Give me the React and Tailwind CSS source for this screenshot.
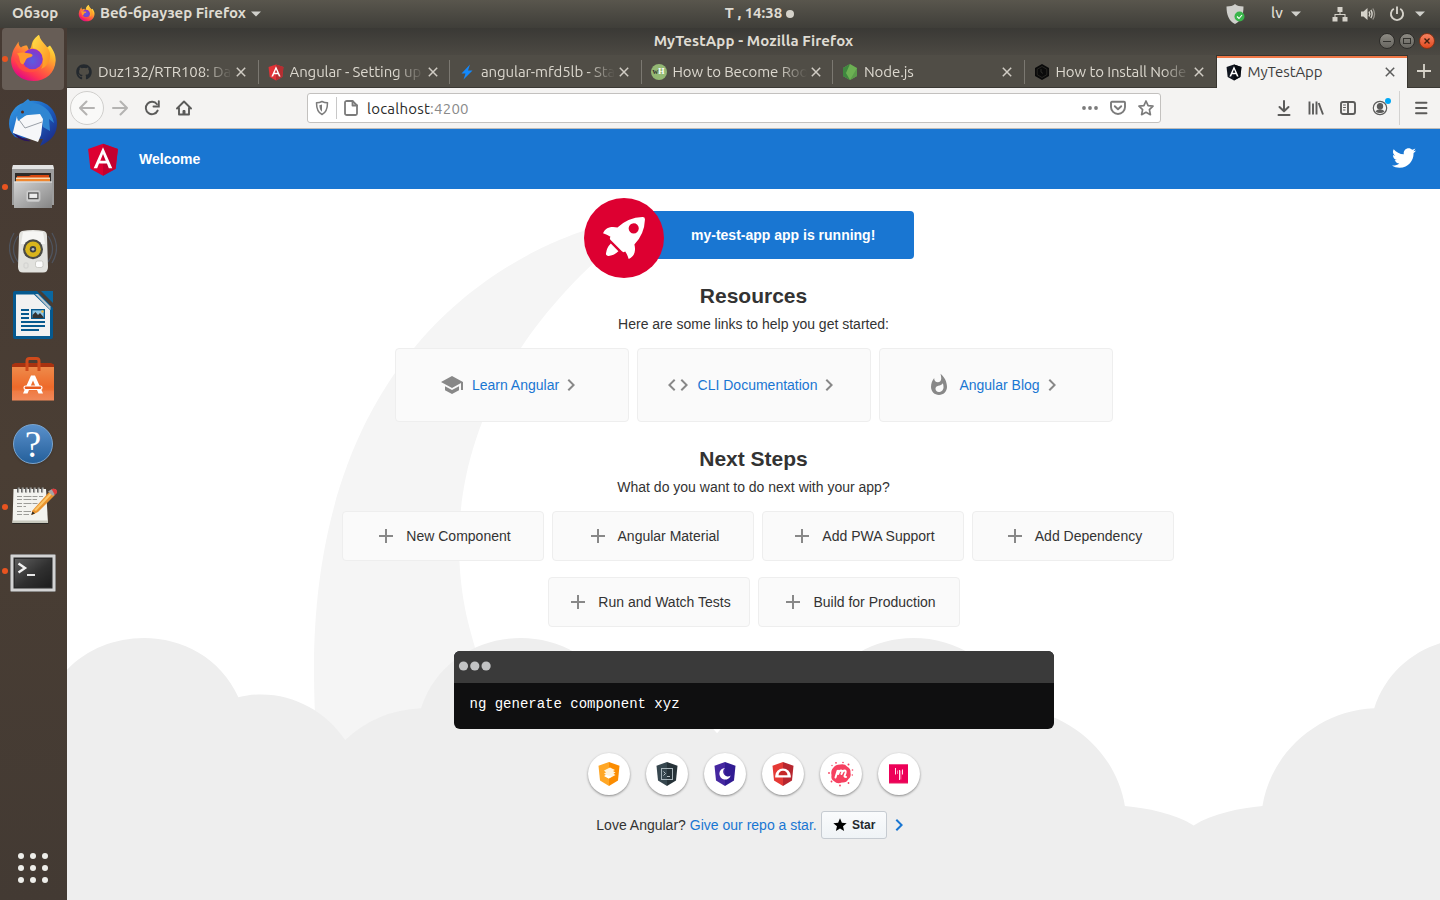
import React from "react";
import { MdSchool, MdCode, MdWhatshot, MdAdd, MdChevronRight, MdStar } from "react-icons/md";
import { FaTwitter, FaGithub } from "react-icons/fa";

const ui = "font-['Ubuntu','Noto_Sans',sans-serif]";

/* ---------- shared drawings ---------- */

function FirefoxIcon({ className, id }) {
  const a = id + "a", b = id + "b", c = id + "c";
  return (
    <svg className={className} viewBox="0 0 48 48">
      <defs>
        <linearGradient id={a} x1="0.8" y1="0.05" x2="0.25" y2="0.95">
          <stop offset="0" stopColor="#fff44f" />
          <stop offset="0.3" stopColor="#ffb62e" />
          <stop offset="0.55" stopColor="#ff7139" />
          <stop offset="0.8" stopColor="#ff3750" />
          <stop offset="1" stopColor="#e00b84" />
        </linearGradient>
        <radialGradient id={b} cx="0.5" cy="0.6" r="0.6">
          <stop offset="0" stopColor="#5b5ce0" />
          <stop offset="0.7" stopColor="#7a3fd0" />
          <stop offset="1" stopColor="#9a2fc6" />
        </radialGradient>
        <linearGradient id={c} x1="0" y1="0" x2="1" y2="1">
          <stop offset="0" stopColor="#ffe14a" />
          <stop offset="1" stopColor="#ff8a1f" />
        </linearGradient>
      </defs>
      <path fill={`url(#${a})`} d="M3 20C4 14 7 11 9.5 6.5 9.5 9.5 10.500 11.500 12 12.500 13.500 11 15.500 10.500 18 10.500L20 15C23 13 22 8 25 4.500 26.500 2.500 28 1 30 0 31 7 35 9 38 12.500L41 10.500C45 16 46.700 20 46.700 25.500 46 38 37 46 24.500 46 9 46 1 34 2.200 23Z" />
      <circle cx="23.500" cy="24" r="10.300" fill={`url(#${b})`} />
      <path fill={`url(#${c})`} d="M29 1C24 5 23 10 24 13 30 14 35 19 34 27 34 30 33 33 32 34 37 32 42 27 41 18 39 10 32 8 30 0Z" />
      <path fill="#ff9a2c" d="M8 18.500C13 16.500 17 18 21 18.500 25 19.500 24 22 20 22.500 16 23.500 17.500 26 14 29.500 9 28 12 22 8 18.500Z" />
      <path fill="#ff5a36" d="M4 22C8 26 12 28 14.500 31 19 36 28 35 33 31 30 38 16 40 10 33Z" opacity=".5" />
    </svg>
  );
}

function AngularShield({ className, left = "#DD0031", right = "#C3002F" }) {
  return (
    <svg className={className} viewBox="0 0 250 250">
      <path fill={left} d="M125 30 31.9 63.2 46.1 186.3 125 230 203.9 186.3 218.1 63.2z" />
      <path fill={right} d="M125 30V230l78.9-43.7 14.2-123.100z" />
      <path fill="#fff" d="M125 52.100 66.800 182.600h21.700l11.700-29.200h49.400l11.700 29.200H183L125 52.100zm17 83.300h-34l17-40.900z" />
    </svg>
  );
}

function Caret() {
  return (
    <svg className="h-[6px] w-[10px] shrink-0" viewBox="0 0 10 6"><path d="M0 .5h10L5 5.500z" fill="#d0d0cb" /></svg>
  );
}

/* ---------- top panel ---------- */

function TopPanel() {
  return (
    <div className={`flex h-7 shrink-0 items-center bg-gradient-to-b from-[#59564d] to-[#3f3e39] pb-px text-[15px] font-bold text-[#dfdbd2] ${ui}`}>
      <div className="flex w-[480px] items-center pl-3">
        <span className="w-[66px] whitespace-nowrap">Обзор</span>
        <FirefoxIcon id="p" className="h-[17px] w-[17px]" />
        <span className="ml-[5px] w-[147px] whitespace-nowrap">Веб-браузер Firefox</span>
        <span className="ml-1 flex"><Caret /></span>
      </div>
      <div className="flex w-[559px] items-center justify-center gap-[4px]">
        <span className="whitespace-pre">T , 14:38</span>
        <span className="h-2 w-2 rounded-full bg-[#d5d2ca]" />
      </div>
      <div className="flex flex-1 items-center justify-end pr-[15px]">
        <svg className="h-[22px] w-[20px]" viewBox="0 0 20 22">
          <path d="M10 1c2 1.800 5 2.500 8.500 2.500C18.500 12 16 18 10 21 4 18 1.500 12 1.500 3.500 5 3.500 8 2.800 10 1z" fill="#cfcfcb" />
          <circle cx="14.500" cy="13.500" r="5" fill="#39b54a" />
          <path d="m12 13.500 2 2 3-3.500" fill="none" stroke="#fff" strokeWidth="1.100" />
        </svg>
        <span className="ml-[26px] w-[14px] font-medium">lv</span>
        <span className="ml-[6px] flex"><Caret /></span>
        <svg className="ml-[31px] h-4 w-4" viewBox="0 0 16 16" fill="#d5d2ca">
          <path d="M5.500 1h5v5h-5zM.5 11h5v4.500h-5zM10.500 11h5v4.500h-5zM7.500 6h1v2h5v3h-1V9h-9v2h-1V8h5z" />
        </svg>
        <svg className="ml-3 h-4 w-4" viewBox="0 0 16 16">
          <path d="M1 5.500h2.500L7.500 2v12L3.500 10.500H1z" fill="#d5d2ca" />
          <path d="M9 5.500q1.600 2.500 0 5M10.800 4q2.600 4 0 8" fill="none" stroke="#d5d2ca" strokeWidth="1.400" />
          <path d="M12.800 2.500q3.500 5.500 0 11" fill="none" stroke="#96938b" strokeWidth="1.300" />
        </svg>
        <svg className="ml-[13px] h-4 w-4" viewBox="0 0 16 16" fill="none" stroke="#d5d2ca" strokeWidth="1.900">
          <path d="M8 .500v7.500M4.800 2.800a6.100 6.100 0 1 0 6.400 0" />
        </svg>
        <span className="ml-[10px] flex"><Caret /></span>
      </div>
    </div>
  );
}

/* ---------- dock ---------- */

function Thunderbird() {
  return (
    <svg className="h-12 w-12" viewBox="0 0 48 48">
      <defs>
        <linearGradient id="tb" x1="0" y1="0" x2="1" y2="1">
          <stop offset="0" stopColor="#3aa3e8" /><stop offset=".5" stopColor="#1b63c4" /><stop offset="1" stopColor="#1b1f7a" />
        </linearGradient>
      </defs>
      <path d="M0 25C0 14 7 6 14 4L19 0 21 2C38 0 48 12 48 24 48 34 44 41 31 47L34 40 10 39 6 38C2 34 0 30 0 25z" fill="url(#tb)" />
      <path d="M20 4C32 3 42 10 45 24L40 20 41 32 34 28 33 18 18 16z" fill="#2f86d2" />
      <path d="M4 33 8 17 31 15 34 20 32 36 29 43 4 34z" fill="#f6f7f9" />
      <path d="M8 18 16 29 33 23" fill="none" stroke="#9aa0a8" strokeWidth="1" />
      <path d="M8 18C9 9 14 3 20 2L26 4C20 8 23 14 16 17L9 22z" fill="#2c86d3" />
      <circle cx="13.500" cy="13" r="1.500" fill="#5a2a1a" />
      <path d="M4 34C10 37 15 40 22 42 16 43 9 40 4 34z" fill="#2a1560" />
    </svg>
  );
}

function Files() {
  return (
    <svg className="h-12 w-12" viewBox="0 0 48 48">
      <defs>
        <linearGradient id="fl" x1="0" y1="0" x2="1" y2="1"><stop offset="0" stopColor="#d2d2d2" /><stop offset="1" stopColor="#858585" /></linearGradient>
      </defs>
      <path d="M4 2h40l1 4v36h-2V45H5v-3H3V6z" fill="#9d9d9d" />
      <path d="M4 2h40l1 4H3z" fill="#e3e3e3" />
      <rect x="6" y="10" width="36" height="10" fill="#2f2b28" />
      <path d="M8 13h12l2-1h18v8H8z" fill="#d9480f" />
      <path d="M7 14.500h34V16H7z" fill="#f8d9b0" /><path d="M7 16h34v3H7z" fill="#f0862d" />
      <rect x="5" y="18.500" width="38" height="26.500" rx="1" fill="url(#fl)" />
      <path d="M5 19h38" stroke="#e5e5e5" />
      <rect x="17.500" y="27.500" width="13.500" height="11" rx="2" fill="#d0d0d0" stroke="#c0c0c0" />
      <rect x="19.700" y="30" width="9.200" height="5.600" fill="#ededed" stroke="#555" strokeWidth="1.300" />
    </svg>
  );
}

function Speaker() {
  return (
    <svg className="h-12 w-12" viewBox="0 0 48 48">
      <g fill="none" stroke="#54647c" strokeWidth="1.300" opacity=".6">
        <path d="M5 6Q-4 21 5 36M9 9Q0 22 9 35M43 6Q52 21 43 36M39 9Q48 22 39 35" />
      </g>
      <path d="M13 4Q24 2 35 4 38 5 38 9L39 40Q39 45.500 34 45.500H14Q9 45.500 9 40L10 9Q10 5 13 4z" fill="#e2e2de" />
      <path d="M14 5Q24 3.500 34 5L36 17H12z" fill="#f6f6f4" />
      <circle cx="24" cy="22.300" r="10" fill="#4b4b45" />
      <circle cx="24" cy="22.300" r="7.800" fill="#d9b51c" />
      <circle cx="24" cy="22.300" r="3.200" fill="#3d4044" /><circle cx="24" cy="22.300" r="1.400" fill="#b9bcc0" />
      <path d="M26.500 36q0-2 2-2h4q1.500 0 1.500 2v2.500q0 2-2 2h-3.500q-2 0-2-2z" fill="#fbfbfa" stroke="#bdbdb8" strokeWidth=".7" />
      <rect x="15" y="36" width="4" height="5" rx="1" fill="none" stroke="#cdcdca" strokeWidth=".8" />
    </svg>
  );
}

function Writer() {
  return (
    <svg className="h-12 w-12" viewBox="0 0 48 48">
      <path d="M6 0h22L44 17v29q0 2-2 2H6q-2 0-2-2V2q0-2 2-2z" fill="#05598f" />
      <path d="M32 0h12v12z" fill="#0b679f" />
      <path d="M7 3.500h18L41 19v26H7z" fill="#f1f1f1" />
      <path d="M26 3 41.500 19V15.500L29 3z" fill="#bcc7ce" />
      <path d="M12 18h8v2h-8zM12 22h8v2h-8zM12 26h8v2h-8zM12 30h24v2H12zM12 34h24v2H12zM12 38h18v2H12z" fill="#07598e" />
      <rect x="22.700" y="18.700" width="12.600" height="8.600" fill="#8dc6e6" stroke="#07598e" strokeWidth="1.400" />
      <path d="M23.500 27v-3l3-3 2.500 3 2-2 3.500 4v1z" fill="#333" /><circle cx="33.500" cy="20.500" r="1.200" fill="#f0b93c" />
    </svg>
  );
}

function Software() {
  return (
    <svg className="h-12 w-12" viewBox="0 0 48 48">
      <defs>
        <linearGradient id="sw" x1="0" y1="0" x2="0" y2="1"><stop offset="0" stopColor="#ee8a4a" /><stop offset=".6" stopColor="#ee6a2a" /><stop offset="1" stopColor="#ef7f4c" /></linearGradient>
      </defs>
      <path d="M3 9.500 6 8H42L45 9.500V13H3z" fill="#a83210" />
      <path d="M3 12h42v33.500H3z" fill="url(#sw)" />
      <path d="M18 16V6q0-2.500 2.500-2.500h7Q30 3.500 30 6V16" fill="none" stroke="#cf4a1b" strokeWidth="3" />
      <path d="M22 20.500h4l8 18h-4.500l-5.500-13-5.500 13H14z" fill="#fff" />
      <rect x="15" y="31" width="18" height="3.500" rx="1.700" fill="#e85a1d" stroke="#fff" strokeWidth="1.200" />
      <path d="M3 35.500h42v10H3z" fill="#fff" opacity=".08" />
    </svg>
  );
}

function Help() {
  return (
    <div className="mt-[2px] flex h-10 w-10 items-center justify-center rounded-full border border-[#7ba5cf] bg-gradient-to-b from-[#5990cb] to-[#24609b] font-['Liberation_Serif',serif] text-[37px] font-medium leading-none text-white shadow">?</div>
  );
}

function Editor() {
  return (
    <svg className="h-12 w-12" viewBox="0 0 48 48">
      <path d="M4.500 6h32.500l2 34H3.500z" fill="#f3f3ef" />
      <path d="M3.500 37.500H39V40H3.500z" fill="#c9cabf" />
      <path d="M3.500 40.500h36" stroke="#2b2925" />
      <g stroke="#555" strokeWidth="1.800"><path d="M9 4.500v5M13 4.500v5M17 4.500v5M21 4.500v5M25 4.500v5M29 4.500v5M33 4.500v5" /></g>
      <g stroke="#d8d8d4" strokeWidth="1"><path d="M10 4.500v5M14 4.500v5M18 4.500v5M22 4.500v5M26 4.500v5M30 4.500v5M34 4.500v5" /></g>
      <g stroke="#9c9c98" strokeWidth="1" strokeDasharray="5 1.500 8 1"><path d="M8 13.500h26M8 16.500h20M8 20.500h24M8 23.500h9M8 28.500h14M8 31.500h12" /></g>
      <path d="M23 28 41 8 46 12 29 29 23 32z" fill="#e9932e" /><path d="M25 27 42 9 44 10 27 28z" fill="#fbc66a" />
      <path d="M39 8.500 43 6Q49 5 47 10L44 13z" fill="#a5a5a5" /><path d="M42.500 6Q49 4.500 48 10L46 12z" fill="#dd3c3c" />
      <path d="M22 32 23.500 28.500 26 30.500z" fill="#332c24" />
    </svg>
  );
}

function Terminal() {
  return (
    <svg className="mt-[6px] h-12 w-12" viewBox="0 0 48 48">
      <defs>
        <linearGradient id="tm" x1="0" y1="0" x2="1" y2="1"><stop offset="0" stopColor="#5e5e5e" /><stop offset=".55" stopColor="#303030" /><stop offset="1" stopColor="#1d1d1d" /></linearGradient>
      </defs>
      <rect x="1.500" y="4.500" width="45" height="37" rx="1" fill="#d3d3d3" stroke="#8c8c8c" strokeWidth=".8" />
      <rect x="4.500" y="7.500" width="39" height="31" fill="#2a2a2a" />
      <rect x="6" y="9" width="36" height="28" fill="url(#tm)" />
      <path d="m9.500 13.500 6.500 4.500-6.500 4.500" fill="none" stroke="#f2f2f2" strokeWidth="2.400" />
      <path d="M18 25h8" stroke="#f2f2f2" strokeWidth="1.900" />
    </svg>
  );
}

function DockItem({ running, children }) {
  return (
    <div className="relative flex h-16 shrink-0 items-center justify-center">
      {running && <span className="absolute left-[2px] top-[29px] h-[6px] w-[6px] rounded-full bg-[#e95420]" />}
      {children}
    </div>
  );
}

function Dock() {
  return (
    <div className="flex w-[67px] shrink-0 flex-col bg-gradient-to-b from-[#463a33] via-[#4a3e34] to-[#433a33]">
      <div className="relative mb-px ml-[2px] flex h-[62px] w-[62px] shrink-0 items-center justify-center rounded-[4px] bg-[#675d56]">
        <span className="absolute left-0 top-[28px] h-[6px] w-[6px] rounded-full bg-[#e95420]" />
        <FirefoxIcon id="d" className="h-12 w-12" />
      </div>
      <div className="flex flex-col pr-px">
        <DockItem><Thunderbird /></DockItem>
        <DockItem running><Files /></DockItem>
        <DockItem><Speaker /></DockItem>
        <DockItem><Writer /></DockItem>
        <DockItem><Software /></DockItem>
        <DockItem><Help /></DockItem>
        <DockItem running><Editor /></DockItem>
        <DockItem running><Terminal /></DockItem>
      </div>
      <div className="mb-[17px] ml-[18px] mt-auto grid w-[30px] grid-cols-3 gap-[6px]">
        {[0, 1, 2, 3, 4, 5, 6, 7, 8].map((n) => <span key={n} className="h-[6px] w-[6px] rounded-full bg-[#eeeeea]" />)}
      </div>
    </div>
  );
}

/* ---------- browser chrome ---------- */

function TitleBar() {
  return (
    <div className={`flex h-[27px] shrink-0 items-center bg-gradient-to-b from-[#3a3935] to-[#4c4943] ${ui}`}>
      <div className="w-[110px]" />
      <div className="flex-1 text-center text-[15px] font-bold tracking-[0.1px] text-[#dfdbd2]">MyTestApp - Mozilla Firefox</div>
      <div className="flex w-[110px] justify-end gap-1 pb-px pr-[5px]">
        <span className="flex h-4 w-4 items-center justify-center rounded-full border border-[#2e2d2a] bg-gradient-to-b from-[#8d8b84] to-[#67655f]"><span className="h-px w-2 bg-[#33322e]" /></span>
        <span className="flex h-4 w-4 items-center justify-center rounded-full border border-[#2e2d2a] bg-gradient-to-b from-[#8d8b84] to-[#67655f]"><span className="h-[6px] w-2 border border-[#33322e]" /></span>
        <span className="flex h-4 w-4 items-center justify-center rounded-full border border-[#8a3416] bg-gradient-to-b from-[#f58260] to-[#e2481a]">
          <svg className="h-[6px] w-[6px]" viewBox="0 0 6 6"><path d="m.5.500 5 5m0-5-5 5" stroke="#40200f" strokeWidth="1.400" /></svg>
        </span>
      </div>
    </div>
  );
}

function Cross({ className }) {
  return <svg className={`h-[10px] w-[10px] shrink-0 ${className}`} viewBox="0 0 10 10"><path d="m.8.800 8.400 8.400m0-8.400L.8 9.200" stroke="currentColor" strokeWidth="1.500" /></svg>;
}

const tabs = [
  { title: "Duz132/RTR108: Da", icon: <FaGithub className="h-4 w-4 text-[#24292e]" /> },
  { title: "Angular - Setting up", icon: <AngularShield className="-mx-[2px] h-5 w-5" left="#e23237" right="#b52e31" /> },
  { title: "angular-mfd5lb - Sta", icon: <svg className="h-4 w-4" viewBox="0 0 16 16"><path d="M11 .500 2.500 9.500h4L4.500 15.500 13.500 6.500H9z" fill="#1389fd" /></svg> },
  { title: "How to Become Roo", icon: <span className="flex h-4 w-4 items-center justify-center rounded-full bg-[#93b874] font-['Liberation_Serif',serif] text-[8px] font-bold leading-none text-white"><span className="text-[#333]">w</span>H</span> },
  { title: "Node.js", icon: <svg className="h-4 w-4" viewBox="0 0 16 16"><path d="M8 0 15 4v8l-7 4-7-4V4z" fill="#6cb053" /><path d="M1 4 8 16 1 12zM8 0 1 4l3 5z" fill="#3f873f" /><path d="M15 4v8l-7 4z" fill="#5b9a4b" /></svg> },
  { title: "How to Install Node", icon: <svg className="h-4 w-4" viewBox="0 0 16 16"><path d="M8 0 15 4v8l-7 4-7-4V4z" fill="#0a0a0a" /><path d="M8 2.500 12.800 5.200v5.500L8 13.500 3.200 10.700V5.200z" fill="none" stroke="#34322d" strokeWidth=".7" /><path d="M7 5v3l2 1.500" stroke="#34322d" strokeWidth=".8" fill="none" /></svg> },
];

function TabStrip() {
  return (
    <div className={`flex h-[33px] shrink-0 bg-[#504d46] text-[15px] text-[#dcd8cf] ${ui}`}>
      {tabs.map((t, i) => (
        <div key={i} className="flex w-[191.500px] shrink-0 items-center border-b border-[#3a3833] pl-[9px] pt-[2px]">
          {t.icon}
          <span className="ml-[6px] w-[134px] shrink-0 overflow-hidden whitespace-nowrap tracking-[-0.1px] [mask-image:linear-gradient(to_right,#000_106px,transparent)]">{t.title}</span>
          <Cross className="ml-[4px] text-[#d0ccc4]" />
          <span className={i < 5 ? "ml-auto h-6 w-px bg-[#7b7871]" : "hidden"} />
        </div>
      ))}
      <div className="-ml-[0.500px] flex w-[192px] shrink-0 items-center border-x border-t border-[#37352f] bg-[#f4f3f2] pl-[9px] text-[#3d3d3d] shadow-[inset_0_2px_0_#f07746]">
        <AngularShield className="-mx-[2px] h-5 w-5" left="#10151f" right="#050910" />
        <span className="ml-[6px] w-[132px] tracking-[-0.1px]">MyTestApp</span>
        <Cross className="ml-[5px] text-[#5b5b5b]" />
      </div>
      <div className="flex flex-1 items-center justify-center border-b border-[#3a3833]">
        <svg className="h-[14px] w-[14px]" viewBox="0 0 14 14"><path d="M7 0v14M0 7h14" stroke="#d8d4cb" strokeWidth="1.800" /></svg>
      </div>
    </div>
  );
}

function Ico({ children, className = "", color = "#5b5b5a", w = 2 }) {
  return <svg className={`h-4 w-4 shrink-0 ${className}`} viewBox="0 0 16 16" fill="none" stroke={color} strokeWidth={w} strokeLinecap="round" strokeLinejoin="round">{children}</svg>;
}

function NavBar() {
  return (
    <div className={`flex h-[41px] shrink-0 items-center border-b border-[#bdbbb9] bg-[#f4f3f2] ${ui}`}>
      <div className="flex w-[240px] items-center pl-[3px]">
        <span className="flex h-[34px] w-[34px] items-center justify-center rounded-full border border-[#d0cfcd] bg-[#f9f9f8]">
          <Ico color="#b4b3b2"><path d="M15 8H1M7.500 1.500 1 8l6.500 6.500" /></Ico>
        </span>
        <Ico color="#b4b3b2" className="ml-2"><path d="M1 8h14M8.500 1.500 15 8l-6.500 6.500" /></Ico>
        <Ico className="ml-4" w={1.900}><path d="M13.700 10.500A6.200 6.200 0 1 1 13 4.300" /><path d="M14.800 1.200v5.300H9.500" strokeLinejoin="miter" /></Ico>
        <Ico className="ml-4" w={1.900}><path d="M1 8.500 8 1.500l7 7M3 8v6.500h10V8" /><path d="M7 14v-3.500h2V14" fill="#5b5b5a" strokeWidth="1" /></Ico>
      </div>
      <div className="flex h-[30px] w-[854px] items-center rounded-[3px] border border-[#c3c1bf] bg-white pl-[6px] pr-[6px]">
        <Ico color="#7b7b7b" w={1.500}><path d="M8 1.500Q10.500 2.800 13.500 2.800C13.500 9 12.500 12.500 8 14.500 3.500 12.500 2.500 9 2.500 2.800Q5.500 2.800 8 1.500z" /><path d="M8 4.500v7.200C6.200 10.500 5.500 8.500 5.400 5.300z" fill="#7b7b7b" stroke="none" /></Ico>
        <span className="ml-[6px] h-[22px] w-px bg-[#c8c8c8]" />
        <Ico color="#7b7b7b" className="ml-[6px]" w={1.800}><path d="M4 1h5.500L14 5.500V13.500Q14 15 12.500 15H4Q2 15 2 13.500V2.500Q2 1 4 1z" /><path d="M9.500 1v4.500H14" /></Ico>
        <span className="ml-[8px] pt-[2px] text-[15px] tracking-[0.230px] text-[#2a2a2a]">localhost<span className="text-[#8a8a8a]">:4200</span></span>
        <span className="ml-auto flex items-center gap-3">
          <svg className="h-4 w-4" viewBox="0 0 16 16" fill="#7b7b7b"><circle cx="2" cy="8" r="1.900" /><circle cx="8" cy="8" r="1.900" /><circle cx="14" cy="8" r="1.900" /></svg>
          <Ico color="#7b7b7b" w={1.900}><path d="M2 1.800h12q1 0 1 1V7A7 7 0 0 1 1 7V2.800q0-1 1-1z" /><path d="m4.800 6.200 3.200 3 3.200-3" /></Ico>
          <Ico color="#7b7b7b" w={1.700}><path d="m8 1 2.100 4.600 4.900.600-3.600 3.500 1 5L8 12.300 3.600 14.700l1-5L1 6.200l4.900-.6z" /></Ico>
        </span>
      </div>
      <div className="ml-auto flex items-center pr-[11px]">
        <Ico><path d="M8 1v10M3.500 7 8 11.300 12.500 7M2.500 15h11" /></Ico>
        <Ico className="ml-4" w={1.900}><path d="M1.500 1.500v13M5 3.500v11M8.500 1.500v13M10.700 3l4.300 11.500" strokeLinecap="butt" /></Ico>
        <Ico className="ml-4" w={1.900}><rect x="1" y="2" width="14" height="12" rx="2" /><path d="M8 2v12" /><path d="M3.500 5h2M3.500 7.500h2M3.500 10h1.500" strokeWidth="1" /></Ico>
        <span className="relative ml-4 flex">
          <Ico w={1.200}><circle cx="8" cy="8" r="6.700" /><circle cx="8" cy="6.200" r="2.600" fill="#5b5b5a" /><path d="M4.300 11.300Q5.500 9.800 8 9.800T11.700 11.300Q10.200 12.500 8 12.500T4.300 11.300z" fill="#5b5b5a" /></Ico>
          <span className="absolute -right-[3px] -top-[2px] h-[6px] w-[6px] rounded-full bg-[#00a8f5]" />
        </span>
        <span className="ml-[11px] h-[34px] w-px bg-[#d3d2d1]" />
        <Ico className="ml-[13px]" w={1.900}><path d="M3 2.800h10.500M3 8h10.500M3 13.200h10.500" /></Ico>
      </div>
    </div>
  );
}

/* ---------- page ---------- */

const resources = [
  ["Learn Angular", MdSchool],
  ["CLI Documentation", MdCode],
  ["Angular Blog", MdWhatshot],
];

function StepRow({ items }) {
  return (
    <div className="flex justify-center gap-2">
      {items.map((s) => (
        <div key={s} className="flex h-[50px] w-[202px] items-center justify-center rounded-[4px] border border-[#eee] bg-[#fafafa]">
          <MdAdd className="mr-2 h-6 w-6 text-[#888]" />
          <span>{s}</span>
        </div>
      ))}
    </div>
  );
}

function Shield({ left, right, children }) {
  return (
    <svg className="h-[26px] w-[26px]" viewBox="0 0 26 26">
      <path fill={left} d="M13 1 2.500 4.800 4 19.500 13 25z" />
      <path fill={right} d="M13 1 23.500 4.800 22 19.500 13 25z" />
      {children}
    </svg>
  );
}

const community = [
  <Shield key="a" left="#ffa726" right="#fb8c00"><path d="m8 9.500 6-3 5 2.500-2 1 2.500 1.500-2 1.200 2 1.300-6.500 3.500L8 15l2-1-2-1.500 2-1z" fill="#fff3dc" /><path d="m10 14 6 1.500-3.500 2-4-2.500z" fill="#fff" /></Shield>,
  <Shield key="b" left="#37474f" right="#263238"><rect x="7.500" y="7.500" width="11" height="11" fill="none" stroke="#a8b4ba" /><path d="m9.500 10.500 2 2-2 2M13 15.500h3" fill="none" stroke="#c5ced2" strokeWidth=".9" /></Shield>,
  <Shield key="c" left="#4527a0" right="#311b92"><path d="M13 7a5.800 5.800 0 1 0 5.700 7.500 3.600 3.600 0 0 1-5.700-7.500z" fill="#fff" /></Shield>,
  <Shield key="d" left="#e53935" right="#b7262f"><path d="M5.200 16.500V15a7.800 7.500 0 0 1 15.600 0v1.500z" fill="#fff" /><path d="M8.500 14.300a4.500 4.500 0 0 1 9 0z" fill="#c62828" /></Shield>,
  <svg key="e" className="h-[26px] w-[26px]" viewBox="0 0 26 26" fill="#f64060">
    <path d="M12 3.500q5-1 7 2 4 2 3.500 6 1 4-2 6.500-2 4-6.500 3.500-5 2-7.500-1-4-2-3-6.500-1-5 2-7.500 2-3 6.500-3z" />
    <circle cx="8" cy="1.800" r=".9" /><circle cx="15" cy="1.500" r=".8" /><circle cx="20.500" cy="3.500" r="1" /><circle cx="24.500" cy="9" r=".8" /><circle cx="1" cy="12" r=".9" /><circle cx="24.300" cy="14" r=".7" /><circle cx="4" cy="4.500" r=".7" /><circle cx="3.500" cy="20.500" r=".9" /><circle cx="12" cy="24.500" r=".9" /><circle cx="20.500" cy="22" r=".9" />
    <path d="M7.500 16.500 9.500 10q1-.5 1.200.500L10.200 13q1-3.500 2.800-3.500 1.500 0 1 2L13.500 13q1.300-3.500 3-3.500t1 2.500l-1 3q-.2 1 1.500 1" fill="none" stroke="#fff" strokeWidth="2" strokeLinecap="round" strokeLinejoin="round" />
  </svg>,
  <svg key="f" className="h-[26px] w-[26px]" viewBox="0 0 26 26"><rect x="3" y="3.500" width="19" height="19" fill="#e91e63" /><rect x="3" y="3.500" width="19" height="18" fill="#ed0058" /><path d="M9.500 7v6.500M13.500 9v10M16.500 8.500v5" stroke="#ffe3ec" strokeWidth="1" /><path d="M11.500 9.500v3.500M14.800 9.500v9" stroke="#ff9abf" strokeWidth=".8" /></svg>,
];

function Page() {
  return (
    <div className="relative isolate flex flex-1 flex-col overflow-hidden bg-white font-['Liberation_Sans',sans-serif] text-[14px] leading-4 text-[#333]">
      <svg className="absolute inset-0 -z-10 h-[771px] w-[1373px]" viewBox="0 0 1373 771">
        <g transform="translate(247 91) scale(.624)">
          <path transform="translate(-147.02 -140.939)" fill="#f5f5f5" d="M644.6,141S143.02,215.537,147.049,870.207s342.774,201.755,342.774,201.755S404.659,847.213,388.815,762.2c-27.116-145.51-11.551-384.124,271.9-609.1C671.15,139.365,644.6,141,644.6,141Z" />
        </g>
        <path transform="translate(-125.3 42.5) scale(.7355)" fill="#eee" d="M2379.709,863.793c10-93-77-171-168-149-52-114-225-105-264,15-75,3-140,59-152,133-30,2.830-66.725,9.829-93.5,26.250-26.771-16.421-63.5-23.420-93.5-26.250-12-74-77-130-152-133-39-120-212-129-264-15-54.084-13.075-106.753,9.173-138.488,48.900-31.734-39.726-84.4-61.974-138.487-48.900-52-114-225-105-264,15a162.027,162.027,0,0,0-103.147,43.044c-30.633-45.365-87.1-72.091-145.206-58.044-52-114-225-105-264,15V1100H2379.709z" />
      </svg>

      <div className="flex h-[60px] shrink-0 items-center bg-[#1976d2] font-bold text-white">
        <AngularShield className="ml-4 h-10 w-10" />
        <span className="ml-4">Welcome</span>
        <FaTwitter className="mb-[2px] ml-auto mr-6 h-6 w-6" />
      </div>

      <div className="flex flex-col items-center">
        <div className="relative mt-[22px] flex h-12 w-[320px] items-center rounded-[4px] bg-[#1976d2] pl-[97.500px] font-bold text-white">
          <span>my-test-app app is running!</span>
          <svg className="absolute -left-[10px] -top-[13px] h-20 w-20" viewBox="0 0 101.678 101.678">
            <circle cx="50.839" cy="50.839" r="50.839" fill="#dd0031" />
            <g transform="translate(24.185 24.185)" fill="#fff">
              <path transform="translate(.371 3.363)" d="M3.4,42.615a3.084,3.084,0,0,0,3.553,3.553,21.419,21.419,0,0,0,12.215-6.107L9.511,30.4A21.419,21.419,0,0,0,3.4,42.615Z" />
              <path d="M53.3,3.221A3.09,3.09,0,0,0,50.081,0,48.227,48.227,0,0,0,18.322,13.437c-6-1.666-14.991-1.221-18.322,7.218A33.892,33.892,0,0,1,9.439,25.1l-.333.666a3.013,3.013,0,0,0,.555,3.553L23.985,43.641a2.9,2.9,0,0,0,3.553.555l.666-.333A33.892,33.892,0,0,1,32.647,53.3c8.55-3.664,8.884-12.326,7.218-18.322A48.227,48.227,0,0,0,53.3,3.221ZM34.424,9.772a6.439,6.439,0,1,1,9.106,9.106,6.368,6.368,0,0,1-9.106,0A6.467,6.467,0,0,1,34.424,9.772Z" />
            </g>
          </svg>
        </div>

        <h2 className="mt-[25px] text-[21px] font-bold leading-6">Resources</h2>
        <p className="mt-2">Here are some links to help you get started:</p>
        <div className="mt-4 flex gap-2">
          {resources.map(([label, Icon]) => (
            <div key={label} className="flex h-[74px] w-[234px] items-center justify-center rounded-[4px] border border-[#eee] bg-[#fafafa]">
              <Icon className="mr-2 h-6 w-6 text-[#888]" />
              <span className="text-[#1976d2]">{label}</span>
              <MdChevronRight className="h-6 w-6 text-[#888]" />
            </div>
          ))}
        </div>

        <h2 className="mt-[25px] text-[21px] font-bold leading-6">Next Steps</h2>
        <p className="mt-2">What do you want to do next with your app?</p>
        <div className="ml-2 mt-4">
          <StepRow items={["New Component", "Angular Material", "Add PWA Support", "Add Dependency"]} />
        </div>
        <div className="mt-4">
          <StepRow items={["Run and Watch Tests", "Build for Production"]} />
        </div>

        <div className="mt-6 w-[600px] overflow-hidden rounded-[6px] bg-[#0f0f10] text-white">
          <div className="flex h-8 items-center bg-[#3a3a3a] pb-[3px] pl-[4px]">
            <svg className="h-[10px] w-[34px]" viewBox="0 0 34 10" fill="#c2c3c4"><circle cx="5.500" cy="5" r="4.600" /><circle cx="16.800" cy="5" r="4.600" /><circle cx="28.100" cy="5" r="4.600" /></svg>
          </div>
          <pre className="flex h-[46px] items-center pb-[5px] pl-4 font-['Liberation_Mono',monospace]">ng generate component xyz</pre>
        </div>

        <div className="mt-6 flex gap-4">
          {community.map((icon, i) => (
            <div key={i} className="flex h-[42px] w-[42px] items-center justify-center rounded-full bg-white shadow-[0_1px_3px_rgba(0,0,0,0.22),0_1px_2px_rgba(0,0,0,0.24)]">{icon}</div>
          ))}
        </div>

        <div className="mt-4 flex items-center">
          <span className="mr-1">Love Angular?</span>
          <span className="text-[#1976d2]">Give our repo a star.</span>
          <span className="ml-1 flex h-7 w-[66px] items-center justify-center rounded-[3px] border border-[#c6cbd1] bg-gradient-to-b from-[#fafbfc] to-[#eff3f6] text-[12px] font-bold text-[#24292e]">
            <MdStar className="mr-1 h-4 w-4 text-black" />Star
          </span>
          <MdChevronRight className="h-6 w-6 text-[#1976d2]" />
        </div>
      </div>
    </div>
  );
}

export default function App() {
  return (
    <div className="flex h-[900px] w-[1440px] flex-col overflow-hidden">
      <TopPanel />
      <div className="flex min-h-0 flex-1">
        <Dock />
        <div className="flex min-w-0 flex-1 flex-col">
          <TitleBar />
          <TabStrip />
          <NavBar />
          <Page />
        </div>
      </div>
    </div>
  );
}
